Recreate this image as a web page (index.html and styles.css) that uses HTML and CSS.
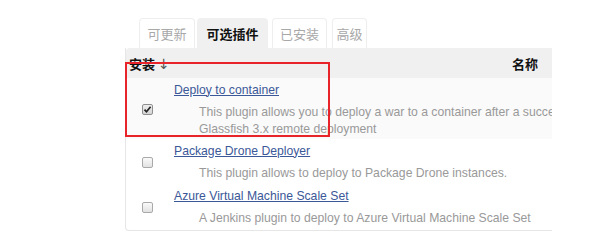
FILE: index.html
```html
<!DOCTYPE html>
<html>
<head>
<meta charset="utf-8">
<link rel="stylesheet" href="styles.css">
</head>
<body>
<div class="page">
  <div class="tabs">
    <div class="tab t1">可更新</div>
    <div class="tab t2 active">可选插件</div>
    <div class="tab t3">已安装</div>
    <div class="tab t4">高级</div>
  </div>
  <div class="table">
    <div class="head">
      <div class="h-install">安装 <span class="arrow">↓</span></div>
      <div class="h-name">名称</div>
    </div>
    <div class="row r1">
      <div class="cb"><span class="box checked"><svg width="9" height="9" viewBox="0 0 9 9"><path d="M1.5 4.6 L3.5 6.8 L7.6 1.8" fill="none" stroke="#222" stroke-width="1.7"/></svg></span></div>
      <div class="info">
        <a class="link" href="#">Deploy to container</a>
        <div class="desc">This plugin allows you to deploy a war to a container after a successful build.<br>Glassfish 3.x remote deployment</div>
      </div>
    </div>
    <div class="row r2">
      <div class="cb"><span class="box"></span></div>
      <div class="info">
        <a class="link" href="#">Package Drone Deployer</a>
        <div class="desc">This plugin allows to deploy to Package Drone instances.</div>
      </div>
    </div>
    <div class="row r3">
      <div class="cb"><span class="box"></span></div>
      <div class="info">
        <a class="link" href="#">Azure Virtual Machine Scale Set</a>
        <div class="desc">A Jenkins plugin to deploy to Azure Virtual Machine Scale Set</div>
      </div>
    </div>
    <div class="mark"></div>
  </div>
</div>
</body>
</html>
```
FILE: styles.css
```css
html, body { margin: 0; padding: 0; background: #fff; }
body { width: 615px; height: 242px; overflow: hidden; font-family: "Liberation Sans", Arial, "Noto Sans CJK SC", sans-serif; }
.page { padding: 18px 0 0 125px; }
.tabs { display: flex; margin-left: 14px; height: 30px; align-items: stretch; }
.tab {
  box-sizing: border-box;
  border: 1px solid #eeeeee; border-bottom: none;
  border-radius: 4px 4px 0 0;
  font-family: "Noto Sans CJK SC", sans-serif; font-size: 13px; color: #a8a8a8;
  display: flex; align-items: center; justify-content: center;
  background: #fff;
}
.t1 { width: 56px; margin-right: 2px; }
.t2 { width: 71px; margin-right: 4px; }
.t3 { width: 55px; margin-right: 5px; }
.t4 { width: 35px; }
.tab.active { background: #f0f0f0; border-color: #f0f0f0; color: #111; font-weight: bold; }
.table {
  position: relative;
  width: 427px;
  border-left: 1px solid #e6e6e6; border-bottom: 1px solid #e6e6e6;
  border-radius: 0 0 0 4px;
  box-sizing: border-box;
}
.head {
  height: 30px; background: #f0f0f0; display: flex; align-items: center; justify-content: space-between;
  font-family: "Noto Sans CJK SC", sans-serif; font-weight: bold; font-size: 13px; color: #111;
  padding: 0 14px 0 3px;
  border-radius: 4px 0 0 0;
}
.arrow { font-weight: normal; color: #555; font-family: "DejaVu Sans", sans-serif; font-size: 14px; }
.row { display: flex; align-items: center; }
.r1 { height: 61px; background: #fafafa; }
.r2 { height: 46px; }
.r3 { height: 45px; }
.cb { width: 43px; display: flex; justify-content: center; }
.box {
  width: 11px; height: 11px; box-sizing: border-box;
  border: 1px solid #a9a9a9; border-radius: 2px;
  background: linear-gradient(#fafafa, #e2e2e2);
  display: flex; align-items: center; justify-content: center;
}
.box.checked { background: linear-gradient(#eeeeee, #d4d4d4); border-color: #8f8f8f; }
.r1 .box { margin-top: 1px; }
.r2 .box { margin-top: 1px; }
.info { flex: 1; white-space: nowrap; overflow: hidden; padding-left: 5px; }
.link { color: #3b5898; font-size: 12.2px; line-height: 16px; text-decoration: underline; display: block; }
.desc { color: #999999; font-size: 12.2px; line-height: 17px; padding-left: 25px; margin-top: 6px; }
.r1 .info { padding-top: 2px; }
.r1 .desc { margin-top: 6px; }
.mark {
  position: absolute; left: -1px; top: 14px; width: 205px; height: 75px;
  border: 2px solid #e8232a; box-sizing: border-box;
}
```
